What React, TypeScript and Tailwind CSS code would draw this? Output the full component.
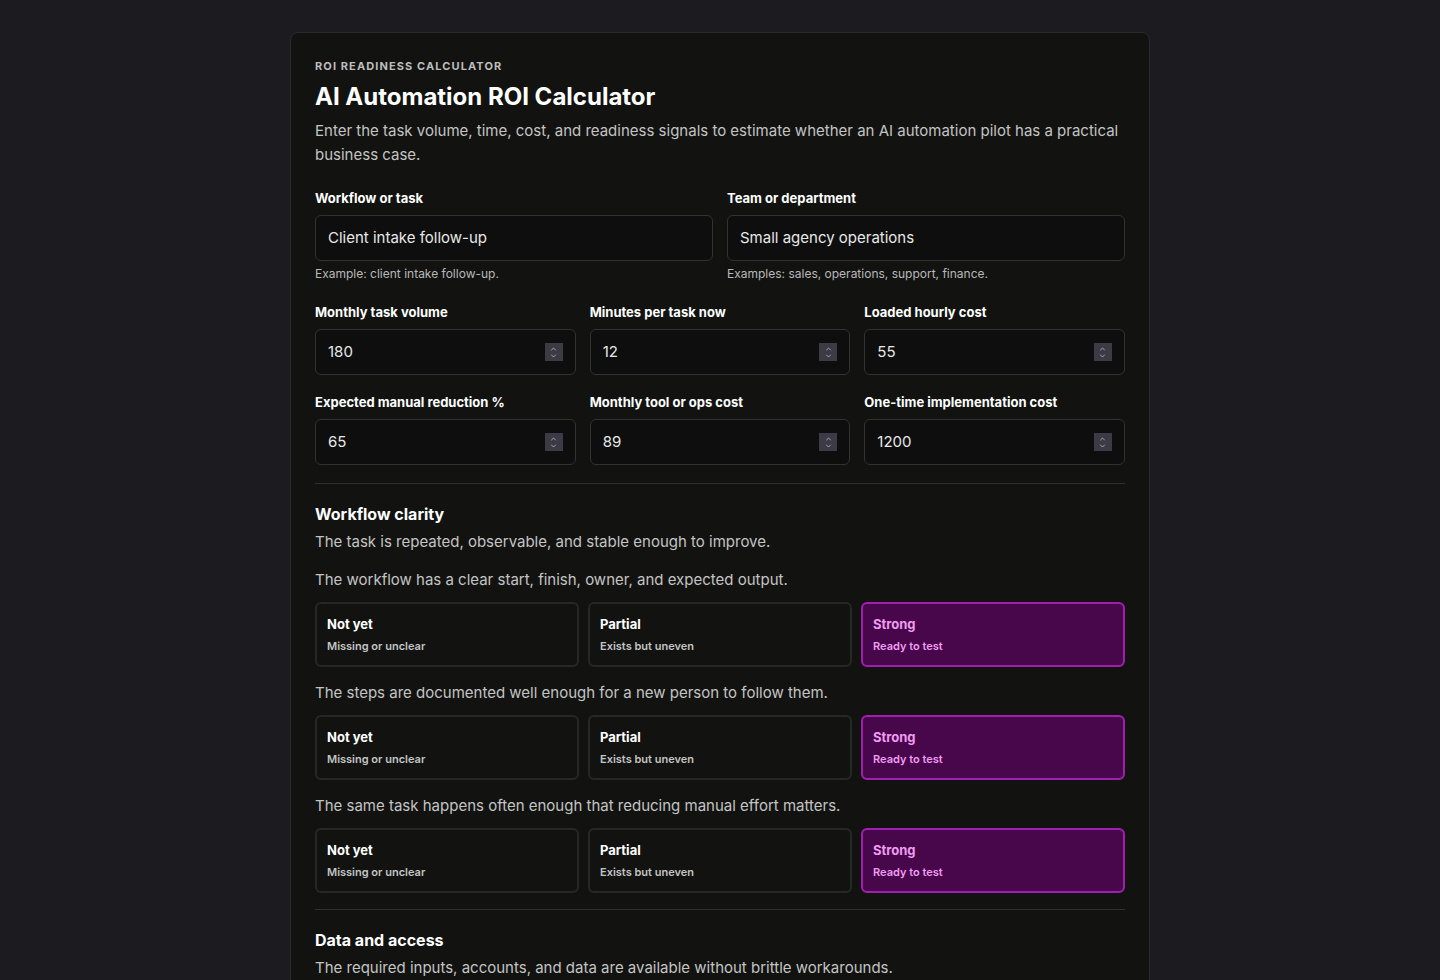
import { ChevronUp, ChevronDown } from "lucide-react";

const font = { fontFamily: "Inter, 'Noto Sans', sans-serif" };

const NumberField = ({ label, value }: { label: string; value: string }) => (
  <div>
    <div className="text-[13px] font-bold text-white mb-[8px] leading-[18px]">{label}</div>
    <div className="h-[46px] rounded-md border border-[#303330] bg-[#0d0e0d] flex items-center justify-between pl-[12px] pr-[12px]">
      <span className="text-[15px] text-[#e8e8e8]">{value}</span>
      <span className="w-[18px] h-[18px] bg-[#3b3a45] flex flex-col items-center justify-center text-[#b8b8c0]">
        <ChevronUp className="w-[11px] h-[8px] -mb-[1px]" strokeWidth={2.5} />
        <ChevronDown className="w-[11px] h-[8px]" strokeWidth={2.5} />
      </span>
    </div>
  </div>
);

const TextField = ({ label, value, help }: { label: string; value: string; help: string }) => (
  <div>
    <div className="text-[13px] font-bold text-white mb-[8px] leading-[18px]">{label}</div>
    <div className="h-[46px] rounded-md border border-[#303330] bg-[#0d0e0d] flex items-center px-[12px]">
      <span className="text-[15px] text-[#e8e8e8]">{value}</span>
    </div>
    <div className="text-[12px] text-[#b8b8b8] mt-[4px]">{help}</div>
  </div>
);

const Options = () => (
  <div className="grid grid-cols-3 gap-[9px] mt-[11px]">
    <div className="h-[65px] rounded-md border-2 border-[#262826] bg-[#121311] px-[10px] flex flex-col justify-center gap-[4px]">
      <div className="text-[13px] font-bold text-white">Not yet</div>
      <div className="text-[11px] font-semibold text-[#c4c4c4]">Missing or unclear</div>
    </div>
    <div className="h-[65px] rounded-md border-2 border-[#262826] bg-[#121311] px-[10px] flex flex-col justify-center gap-[4px]">
      <div className="text-[13px] font-bold text-white">Partial</div>
      <div className="text-[11px] font-semibold text-[#c4c4c4]">Exists but uneven</div>
    </div>
    <div className="h-[65px] rounded-md border-2 border-[#a11fb0] bg-[#48074b] px-[10px] flex flex-col justify-center gap-[4px]">
      <div className="text-[13px] font-bold text-[#ef9cf2]">Strong</div>
      <div className="text-[11px] font-semibold text-[#ef9cf2]">Ready to test</div>
    </div>
  </div>
);

const Question = ({ text, first }: { text: string; first?: boolean }) => (
  <div className={first ? "mt-[16px]" : "mt-[15px]"}>
    <div className="text-[15px] text-[#c4c4c4] leading-[22px]">{text}</div>
    <Options />
  </div>
);

export default function App() {
  return (
    <div className="min-h-[980px] bg-[#1c1b20] pt-[32px]" style={font}>
      <div className="w-[860px] mx-auto bg-[#121311] border border-[#2a2b2a] rounded-lg px-[24px] pt-[25px] pb-[40px]">
        <div className="text-[11px] font-bold tracking-[0.1em] text-[#bdbdbd] leading-[16px]">ROI READINESS CALCULATOR</div>
        <h1 className="text-[24px] font-bold text-white mt-[7px] leading-[32px]">AI Automation ROI Calculator</h1>
        <p className="text-[15px] text-[#c4c4c4] leading-[24px] mt-[6px]">
          Enter the task volume, time, cost, and readiness signals to estimate whether an AI automation pilot has a practical business case.
        </p>
        <div className="grid grid-cols-2 gap-[14px] mt-[22px]">
          <TextField label="Workflow or task" value="Client intake follow-up" help="Example: client intake follow-up." />
          <TextField label="Team or department" value="Small agency operations" help="Examples: sales, operations, support, finance." />
        </div>
        <div className="grid grid-cols-3 gap-x-[14px] gap-y-[18px] mt-[20px]">
          <NumberField label="Monthly task volume" value="180" />
          <NumberField label="Minutes per task now" value="12" />
          <NumberField label="Loaded hourly cost" value="55" />
          <NumberField label="Expected manual reduction %" value="65" />
          <NumberField label="Monthly tool or ops cost" value="89" />
          <NumberField label="One-time implementation cost" value="1200" />
        </div>
        <div className="border-t border-[#2d2f2d] mt-[18px] pt-[19px]">
          <h2 className="text-[16px] font-bold text-white leading-[22px]">Workflow clarity</h2>
          <p className="text-[15px] text-[#c4c4c4] leading-[22px] mt-[6px]">The task is repeated, observable, and stable enough to improve.</p>
          <Question first text="The workflow has a clear start, finish, owner, and expected output." />
          <Question text="The steps are documented well enough for a new person to follow them." />
          <Question text="The same task happens often enough that reducing manual effort matters." />
        </div>
        <div className="border-t border-[#2d2f2d] mt-[16px] pt-[19px]">
          <h2 className="text-[16px] font-bold text-white leading-[22px]">Data and access</h2>
          <p className="text-[15px] text-[#c4c4c4] leading-[22px] mt-[6px]">The required inputs, accounts, and data are available without brittle workarounds.</p>
        </div>
      </div>
    </div>
  );
}
